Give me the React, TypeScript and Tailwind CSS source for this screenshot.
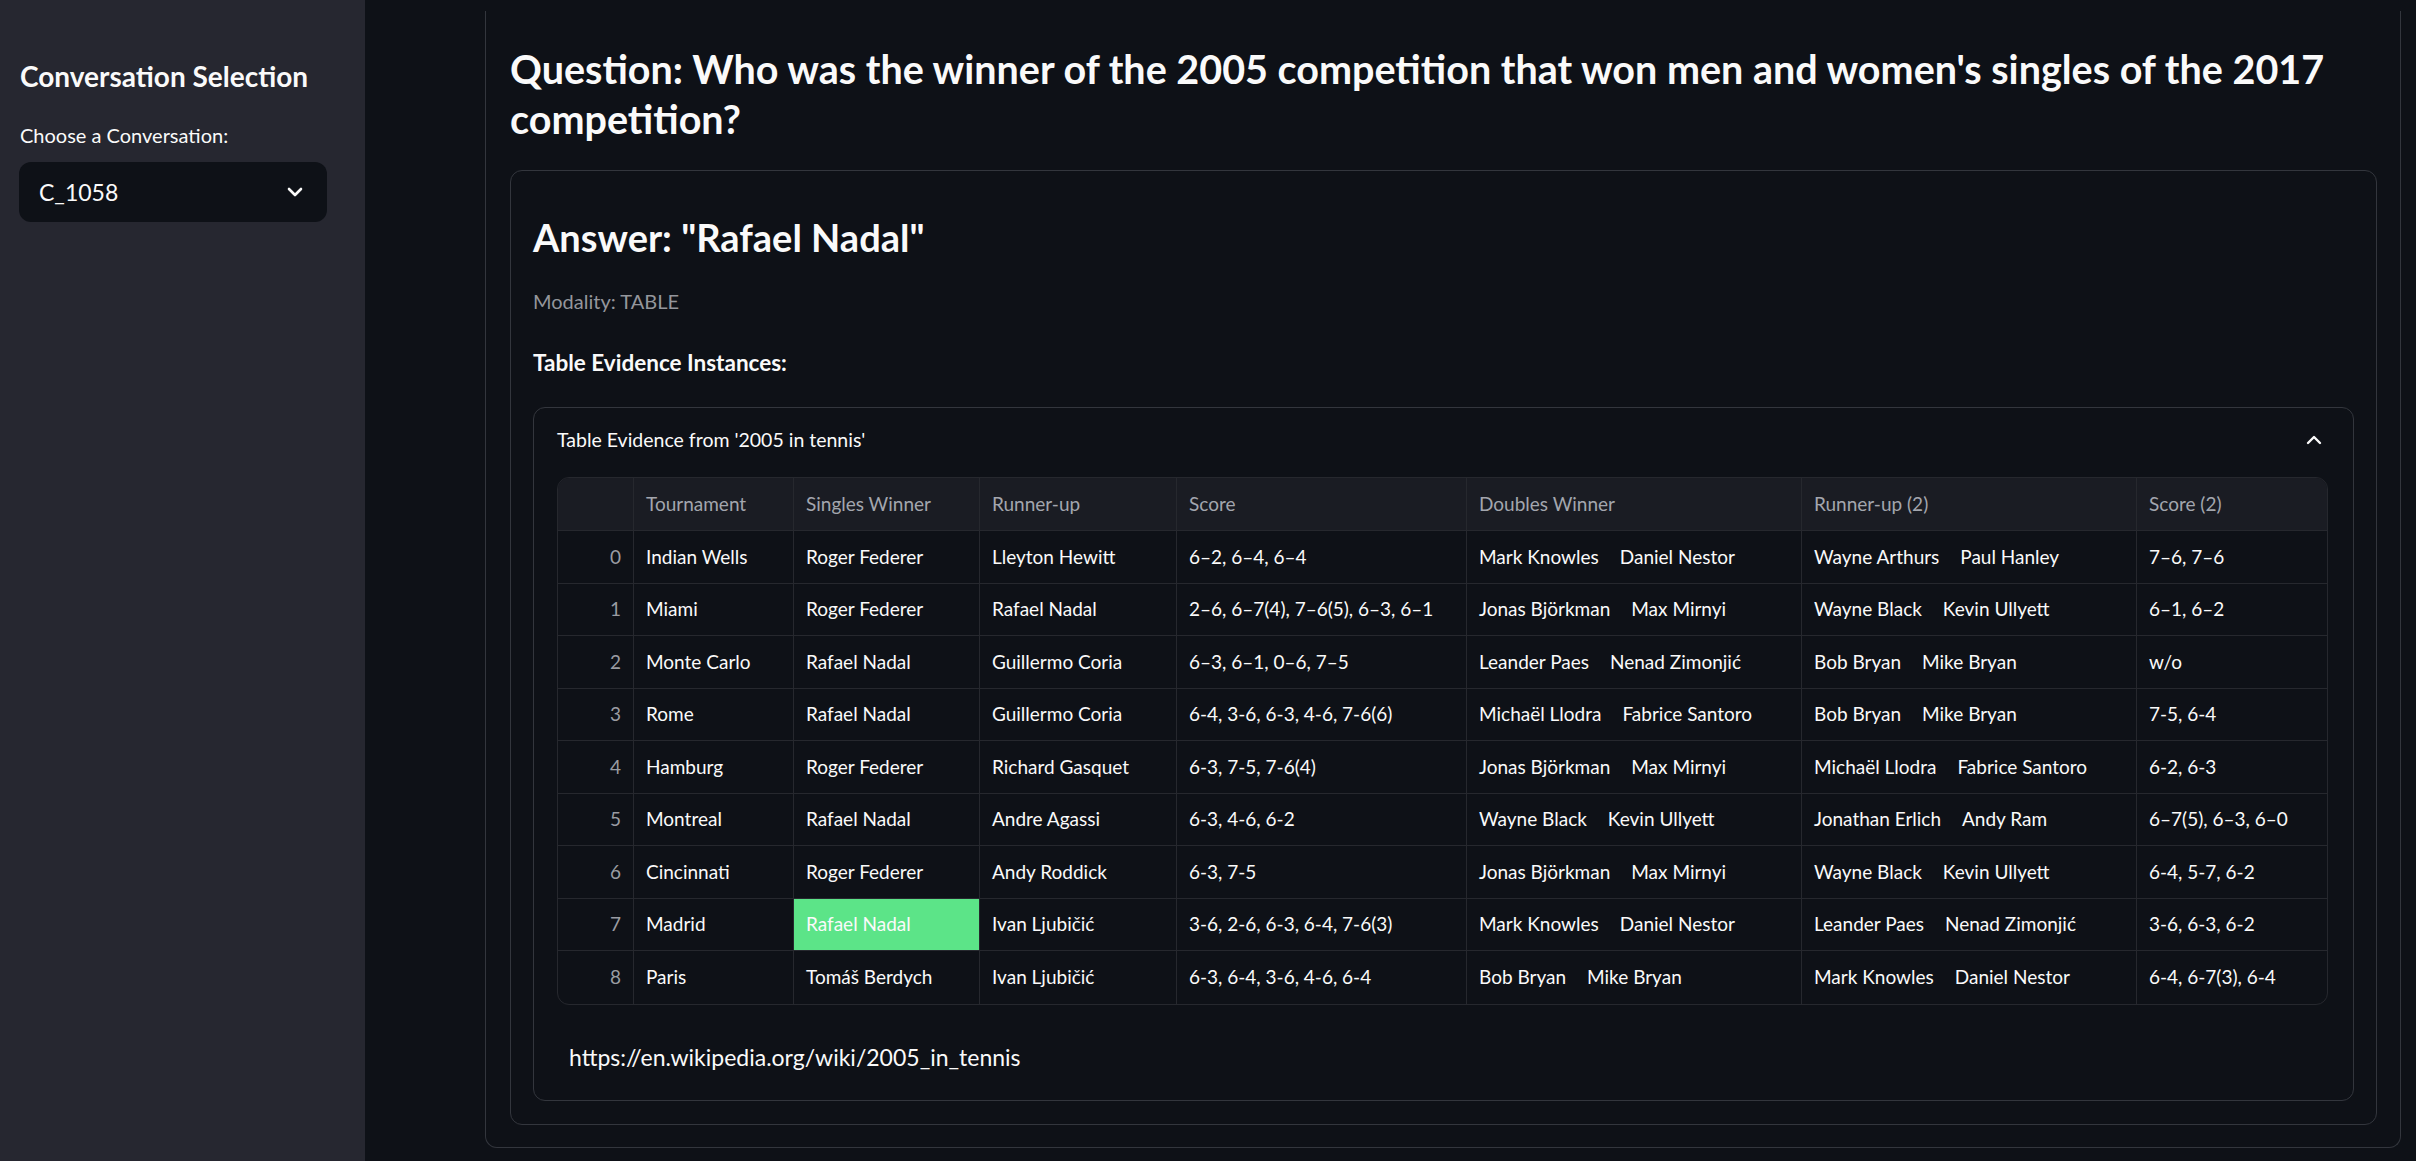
import React from "react";

type Row = {
  tournament: string;
  winner: string;
  runnerUp: string;
  score: string;
  doubles: [string, string];
  doublesRunnerUp: [string, string];
  score2: string;
  highlight?: boolean;
};

const rows: Row[] = [
  { tournament: "Indian Wells", winner: "Roger Federer", runnerUp: "Lleyton Hewitt", score: "6–2, 6–4, 6–4", doubles: ["Mark Knowles", "Daniel Nestor"], doublesRunnerUp: ["Wayne Arthurs", "Paul Hanley"], score2: "7–6, 7–6" },
  { tournament: "Miami", winner: "Roger Federer", runnerUp: "Rafael Nadal", score: "2–6, 6–7(4), 7–6(5), 6–3, 6–1", doubles: ["Jonas Björkman", "Max Mirnyi"], doublesRunnerUp: ["Wayne Black", "Kevin Ullyett"], score2: "6–1, 6–2" },
  { tournament: "Monte Carlo", winner: "Rafael Nadal", runnerUp: "Guillermo Coria", score: "6–3, 6–1, 0–6, 7–5", doubles: ["Leander Paes", "Nenad Zimonjić"], doublesRunnerUp: ["Bob Bryan", "Mike Bryan"], score2: "w/o" },
  { tournament: "Rome", winner: "Rafael Nadal", runnerUp: "Guillermo Coria", score: "6-4, 3-6, 6-3, 4-6, 7-6(6)", doubles: ["Michaël Llodra", "Fabrice Santoro"], doublesRunnerUp: ["Bob Bryan", "Mike Bryan"], score2: "7-5, 6-4" },
  { tournament: "Hamburg", winner: "Roger Federer", runnerUp: "Richard Gasquet", score: "6-3, 7-5, 7-6(4)", doubles: ["Jonas Björkman", "Max Mirnyi"], doublesRunnerUp: ["Michaël Llodra", "Fabrice Santoro"], score2: "6-2, 6-3" },
  { tournament: "Montreal", winner: "Rafael Nadal", runnerUp: "Andre Agassi", score: "6-3, 4-6, 6-2", doubles: ["Wayne Black", "Kevin Ullyett"], doublesRunnerUp: ["Jonathan Erlich", "Andy Ram"], score2: "6–7(5), 6–3, 6–0" },
  { tournament: "Cincinnati", winner: "Roger Federer", runnerUp: "Andy Roddick", score: "6-3, 7-5", doubles: ["Jonas Björkman", "Max Mirnyi"], doublesRunnerUp: ["Wayne Black", "Kevin Ullyett"], score2: "6-4, 5-7, 6-2" },
  { tournament: "Madrid", winner: "Rafael Nadal", runnerUp: "Ivan Ljubičić", score: "3-6, 2-6, 6-3, 6-4, 7-6(3)", doubles: ["Mark Knowles", "Daniel Nestor"], doublesRunnerUp: ["Leander Paes", "Nenad Zimonjić"], score2: "3-6, 6-3, 6-2", highlight: true },
  { tournament: "Paris", winner: "Tomáš Berdych", runnerUp: "Ivan Ljubičić", score: "6-3, 6-4, 3-6, 4-6, 6-4", doubles: ["Bob Bryan", "Mike Bryan"], doublesRunnerUp: ["Mark Knowles", "Daniel Nestor"], score2: "6-4, 6-7(3), 6-4" },
];

const headers = ["", "Tournament", "Singles Winner", "Runner-up", "Score", "Doubles Winner", "Runner-up (2)", "Score (2)"];

function Pair({ names }: { names: [string, string] }) {
  return (
    <div className="flex gap-[21px]">
      <span>{names[0]}</span>
      <span>{names[1]}</span>
    </div>
  );
}

function EvidenceTable() {
  return (
    <div className="w-[1771px] rounded-[12px] border border-[#26282e] overflow-hidden text-[19px] text-[#fafafa]">
      <div className="grid grid-cols-[76px_160px_186px_197px_290px_335px_335px_190px] bg-[#1a1c23] h-[53px] border-b border-[#26282e]">
        {headers.map((h, i) => (
          <div
            key={i}
            className={
              i < headers.length - 1
                ? "flex items-center px-[12px] text-[#a3a6ae] border-r border-[#26282e]"
                : "flex items-center px-[12px] text-[#a3a6ae]"
            }
          >
            {h}
          </div>
        ))}
      </div>
      {rows.map((r, idx) => (
        <div
          key={idx}
          className={
            idx < rows.length - 1
              ? "grid grid-cols-[76px_160px_186px_197px_290px_335px_335px_190px] h-[52.5px] border-b border-[#26282e]"
              : "grid grid-cols-[76px_160px_186px_197px_290px_335px_335px_190px] h-[52.5px]"
          }
        >
          <div className="flex items-center justify-end px-[12px] text-[#9a9ca2] border-r border-[#26282e]">{idx}</div>
          <div className="flex items-center px-[12px] border-r border-[#26282e]">{r.tournament}</div>
          <div
            className={
              r.highlight
                ? "flex items-center px-[12px] border-r border-[#26282e] bg-[#5ce488] text-[#fafafa]"
                : "flex items-center px-[12px] border-r border-[#26282e]"
            }
          >
            {r.winner}
          </div>
          <div className="flex items-center px-[12px] border-r border-[#26282e]">{r.runnerUp}</div>
          <div className="flex items-center px-[12px] border-r border-[#26282e]">{r.score}</div>
          <div className="flex items-center px-[12px] border-r border-[#26282e]">
            <Pair names={r.doubles} />
          </div>
          <div className="flex items-center px-[12px] border-r border-[#26282e]">
            <Pair names={r.doublesRunnerUp} />
          </div>
          <div className="flex items-center px-[12px]">{r.score2}</div>
        </div>
      ))}
    </div>
  );
}

export default function App() {
  return (
    <div className="flex h-[1161px] w-full overflow-hidden bg-[#0e1117] text-[#fafafa] font-['Lato',sans-serif]">
      {/* sidebar */}
      <aside className="w-[365px] shrink-0 bg-[#262730] pt-[59px]">
        <h2 className="ml-[20px] text-[28px] leading-[35px] font-bold">Conversation Selection</h2>
        <div className="ml-[20px] mt-[29px] text-[20px] leading-[25px]">Choose a Conversation:</div>
        <div className="ml-[19px] mt-[14px] w-[308px] h-[60px] rounded-[12px] bg-[#0e1117] flex items-center justify-between pl-[20px] pr-[24px]">
          <span className="text-[23px]">C_1058</span>
          <svg width="16" height="10" viewBox="0 0 16 10" fill="none">
            <path d="M2 2l6 6 6-6" stroke="#fafafa" strokeWidth="2.6" strokeLinecap="round" strokeLinejoin="round" />
          </svg>
        </div>
      </aside>

      {/* main */}
      <main className="flex-1 pt-[11px] pl-[120px] pr-[15px]">
        <div className="border-x border-b border-[#33363d] rounded-b-[12px] pt-[33px] pl-[24px] pr-[23px] pb-[22px]">
          <h1 className="text-[39.5px] leading-[50px] font-bold">
            Question: Who was the winner of the 2005 competition that won men and women's singles of the 2017 competition?
          </h1>

          <div className="mt-[26px] border border-[#33363d] rounded-[12px] pt-[42px] px-[22px] pb-[23px]">
            <h2 className="text-[38px] leading-[48px] font-bold">Answer: "Rafael Nadal"</h2>
            <div className="mt-[25px] text-[20px] leading-[30px] text-[#94969c]">Modality: TABLE</div>
            <div className="mt-[30px] text-[22.5px] leading-[33px] font-bold">Table Evidence Instances:</div>

            <div className="mt-[28px] border border-[#33363d] rounded-[12px]">
              <div className="flex items-center justify-between pt-[18px] pl-[23px] pr-[31px]">
                <span className="text-[19.5px] leading-[28px]">Table Evidence from '2005 in tennis'</span>
                <svg width="16" height="10" viewBox="0 0 16 10" fill="none">
                  <path d="M2 8l6-6 6 6" stroke="#fafafa" strokeWidth="2.4" strokeLinecap="round" strokeLinejoin="round" />
                </svg>
              </div>
              <div className="mt-[23px] px-[23px]">
                <EvidenceTable />
              </div>
              <div className="mt-[35px] pl-[35px] pb-[26px] text-[23px] leading-[34px]">
                https://en.wikipedia.org/wiki/2005_in_tennis
              </div>
            </div>
          </div>
        </div>
      </main>
    </div>
  );
}
